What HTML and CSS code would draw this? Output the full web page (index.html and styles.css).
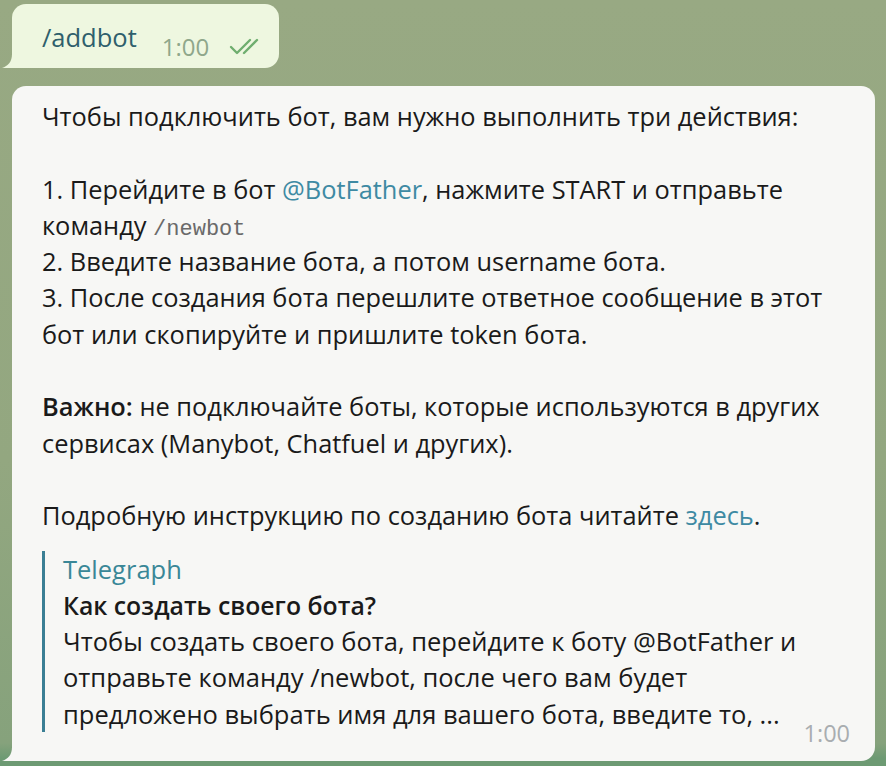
FILE: index.html
```html
<!DOCTYPE html>
<html lang="ru">
<head>
  <meta charset="UTF-8">
  <title>Чат</title>
  <link rel="stylesheet" href="styles.css">
</head>
<body>
  <div class="chat">
    <div class="bubble out">
      <span class="cmd">/addbot</span>
      <span class="meta">
        <span class="time">1:00</span>
        <svg class="ticks" width="34" height="20" viewBox="0 0 34 20">
          <path d="M2 10 L8 16 L21 3" fill="none" stroke="#6fae6f" stroke-width="2.4" stroke-linecap="round" stroke-linejoin="round"/>
          <path d="M15 16 L28 3" fill="none" stroke="#6fae6f" stroke-width="2.4" stroke-linecap="round"/>
        </svg>
      </span>
    </div>

    <div class="bubble in">
      <p>Чтобы подключить бот, вам нужно выполнить три действия:</p>
      <p>1. Перейдите в бот <a href="#">@BotFather</a>, нажмите START и отправьте команду <code>/newbot</code><br>
        2. Введите название бота, а потом username бота.<br>
        3. После создания бота перешлите ответное сообщение в этот бот или скопируйте и пришлите token бота.</p>
      <p><b>Важно:</b> не подключайте боты, которые используются в других сервисах (Manybot, Chatfuel и других).</p>
      <p>Подробную инструкцию по созданию бота читайте <a href="#">здесь</a>.</p>
      <div class="preview">
        <div class="site">Telegraph</div>
        <div class="title">Как создать своего бота?</div>
        <div class="desc">Чтобы создать своего бота, перейдите к боту @BotFather и отправьте команду /newbot, после чего вам будет предложено выбрать имя для вашего бота, введите то, ...</div>
      </div>
      <div class="stamp">1:00</div>
    </div>
  </div>
</body>
</html>
```

FILE: styles.css
```css
html, body {
    margin: 0;
    height: 100%;
}

body {
    background: linear-gradient(180deg, #98a983 0%, #93a780 60%, #86a27c 97%, #6d9a73 99%);
    font-family: "Open Sans", "Liberation Sans", sans-serif;
    color: #1a1a1a;
}

.chat {
    display: flex;
    flex-direction: column;
    align-items: flex-start;
    gap: 18px;
    padding: 4px 11px 0 12px;
}

.bubble {
    position: relative;
    border-radius: 14px;
    border-bottom-left-radius: 0;
}

.bubble::before {
    content: "";
    position: absolute;
    left: -10px;
    bottom: 0;
    width: 10px;
    height: 14px;
    background: inherit;
    clip-path: path("M10 0 C10 8 6 12 0 14 L10 14 Z");
}

.out {
    background: #eef7e0;
    display: flex;
    gap: 25px;
    padding: 18px 16px 16px 30px;
}

.cmd {
    font-size: 25.5px;
    color: #2f5f6c;
    line-height: 30px;
    align-self: flex-start;
}

.meta {
    display: flex;
    align-items: center;
    gap: 20px;
    align-self: flex-end;
    margin-bottom: -10px;
}

.time {
    font-size: 24px;
    line-height: 30px;
    color: #8fa78b;
}

.ticks {
    display: block;
}

.in {
    align-self: stretch;
    background: #f7f7f5;
    padding: 12px 30px 16px 30px;
    font-size: 25.4px;
    line-height: 36.3px;
}

.in p {
    margin: 0 0 36.3px 0;
}

.in p:nth-of-type(4) {
    margin-bottom: 17px;
}

.in a {
    color: #3e8aa3;
    text-decoration: none;
}

.in b {
    font-weight: 600;
}

code {
    font-family: "Liberation Mono", monospace;
    font-size: 22px;
    line-height: 1;
    color: #6a6a6a;
}

.preview {
    border-left: 3px solid #3b7f94;
    padding-left: 18px;
    margin-right: 20px;
    font-size: 25.5px;
}

.site {
    color: #3a8797;
}

.title {
    font-weight: 600;
    font-size: 24.8px;
}

.stamp {
    text-align: right;
    font-size: 23.5px;
    color: #a9adb0;
    line-height: 24px;
    margin-top: -11px;
    margin-right: -5px;
}
```
